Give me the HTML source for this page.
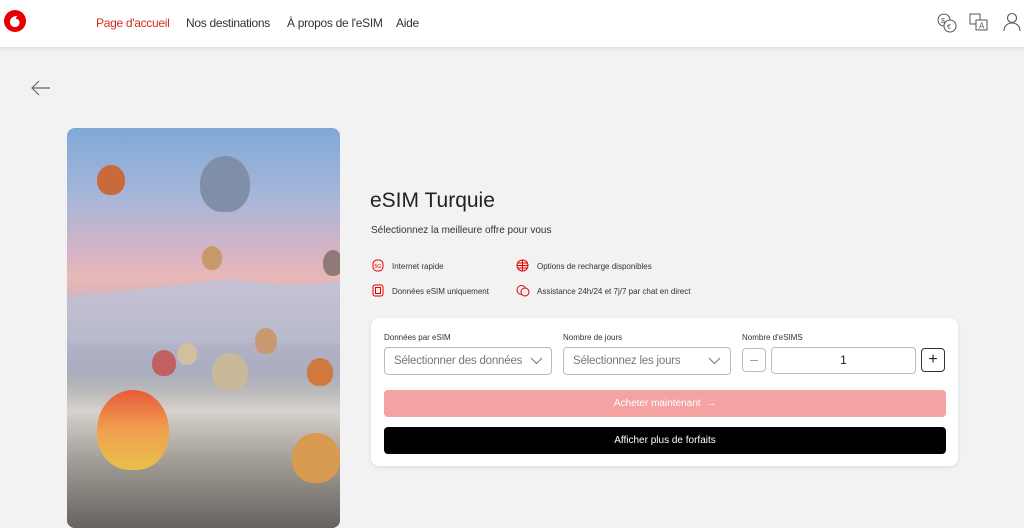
<!DOCTYPE html>
<html><head><meta charset="utf-8"><style>
*{margin:0;padding:0;box-sizing:border-box}
body{width:1024px;height:518px;overflow:hidden;background:#f2f2f2;font-family:"Liberation Sans",sans-serif;color:#222;position:relative}
.hdr{position:absolute;left:0;top:0;width:1024px;height:47px;background:#fff;box-shadow:0 1px 4px rgba(0,0,0,.12)}
.nav{position:absolute;top:16px;font-size:12px;letter-spacing:-0.3px;color:#333;white-space:nowrap}
.abs{position:absolute}
.img{position:absolute;left:67px;top:128px;width:273px;height:400px;border-radius:8px;overflow:hidden;
background:linear-gradient(180deg,#7fa9d6 0%,#a9b6d8 18%,#d9b3c4 32%,#e9b8b6 38%,#c9b3c4 44%,#b7b3c8 52%,#a9aec0 60%,#8d8e96 70%,#9b9690 80%,#6f6a66 92%,#585450 100%)}
.b{position:absolute;border-radius:50% 50% 45% 45%}
.ft{position:absolute;font-size:8px;color:#333;white-space:nowrap}
.lbl{position:absolute;font-size:8px;color:#333}
.sel{position:absolute;top:347px;height:28px;border:1px solid #bbb;border-radius:4px;background:#fff;font-size:11.5px;letter-spacing:-0.2px;color:#777;padding:7px 9px;white-space:nowrap}
</style></head><body>
<div class="hdr">
<svg class="abs" style="left:4px;top:10px" width="22" height="22" viewBox="0 0 22 22"><circle cx="11" cy="11" r="11" fill="#e60000"/><path d="M12 6c-4 0.5-6 3-6 6s2 5 5 5 4.5-2 4.5-4.5-1.8-3.5-3.5-3.6c0-1.5.5-2.5 2-3z" fill="#fff"/></svg>
<div class="nav" style="left:96px;color:#d52b1e">Page d'accueil</div>
<div class="nav" style="left:186px">Nos destinations</div>
<div class="nav" style="left:287px">À propos de l'eSIM</div>
<div class="nav" style="left:396px">Aide</div>
<svg class="abs" style="left:936px;top:12px" width="22" height="22" fill="none" stroke="#555" stroke-width="1"><circle cx="8" cy="8" r="6"/><circle cx="14" cy="14" r="6" fill="#fff"/><text x="5" y="11" font-size="7" fill="#555" stroke="none">$</text><text x="11" y="17" font-size="7" fill="#555" stroke="none">€</text></svg>
<svg class="abs" style="left:969px;top:13px" width="20" height="18" fill="none" stroke="#555" stroke-width="1"><rect x="1" y="1" width="10" height="10"/><rect x="7" y="7" width="11" height="10" fill="#fff"/><text x="10" y="15.5" font-size="8" fill="#555" stroke="none">A</text></svg>
<svg class="abs" style="left:1003px;top:12px" width="18" height="20" fill="none" stroke="#555" stroke-width="1.1"><circle cx="9" cy="6" r="4.5"/><path d="M1 19c0-5 3.5-8 8-8s8 3 8 8"/></svg>
</div>
<svg class="abs" style="left:30px;top:80px" width="20" height="16" fill="none" stroke="#666" stroke-width="1.2"><path d="M20 8H2M9 1L2 8l7 7"/></svg>
<div class="img">
<div class="abs" style="left:0;top:145px;width:273px;height:70px;background:linear-gradient(180deg,#c8c3d6,#b7b9cc);clip-path:polygon(0 35%,30% 22%,60% 8%,80% 18%,100% 12%,100% 100%,0 100%)"></div>
<div class="abs" style="left:0;top:240px;width:273px;height:170px;background:linear-gradient(180deg,rgba(200,195,200,0),#d8d2cc 25%,#a29c96 55%,#5f5a56)"></div>
<div class="b" style="left:133px;top:28px;width:50px;height:56px;background:#7f8fa8"></div>
<div class="b" style="left:30px;top:37px;width:28px;height:30px;background:#c86a3c"></div>
<div class="b" style="left:135px;top:118px;width:20px;height:24px;background:#c89a6a"></div>
<div class="b" style="left:256px;top:122px;width:20px;height:26px;background:#8f7a78"></div>
<div class="b" style="left:30px;top:262px;width:72px;height:80px;background:linear-gradient(180deg,#e85a3a,#f0a050 50%,#e8c04a)"></div>
<div class="b" style="left:225px;top:305px;width:48px;height:50px;background:#d89a50"></div>
<div class="b" style="left:145px;top:225px;width:36px;height:38px;background:#c9b89a"></div>
<div class="b" style="left:188px;top:200px;width:22px;height:26px;background:#c89870"></div>
<div class="b" style="left:85px;top:222px;width:24px;height:26px;background:#c06060"></div>
<div class="b" style="left:110px;top:215px;width:20px;height:22px;background:#d0c0a0"></div>
<div class="b" style="left:240px;top:230px;width:26px;height:28px;background:#d07a40"></div>
</div>
<div class="abs" style="left:370px;top:189px;font-size:21px;color:#222">eSIM Turquie</div>
<div class="abs" style="left:371px;top:225px;font-size:10px;color:#333">Sélectionnez la meilleure offre pour vous</div>
<svg class="abs" style="left:372px;top:259px" width="12" height="13" fill="none" stroke="#e60000"><rect x="1" y="1" width="10" height="11" rx="4"/><text x="2.5" y="9" font-size="5" fill="#e60000" stroke="none">5G</text></svg>
<div class="ft" style="left:392px;top:262px">Internet rapide</div>
<svg class="abs" style="left:372px;top:284px" width="12" height="13" fill="none" stroke="#e60000"><rect x="1" y="1" width="10" height="11" rx="2"/><rect x="3.5" y="3.5" width="5" height="6"/></svg>
<div class="ft" style="left:392px;top:287px">Données eSIM uniquement</div>
<svg class="abs" style="left:516px;top:259px" width="13" height="13" fill="none" stroke="#e60000"><circle cx="6.5" cy="6.5" r="5.5"/><path d="M1 6.5h11M6.5 1v11M2 4h9M2 9h9"/></svg>
<div class="ft" style="left:537px;top:262px">Options de recharge disponibles</div>
<svg class="abs" style="left:516px;top:284px" width="14" height="13" fill="none" stroke="#e60000"><circle cx="5.5" cy="6" r="4.5"/><circle cx="9" cy="8" r="4" fill="#f2f2f2"/></svg>
<div class="ft" style="left:537px;top:287px">Assistance 24h/24 et 7j/7 par chat en direct</div>
<div class="abs" style="left:371px;top:318px;width:587px;height:148px;background:#fff;border-radius:8px;box-shadow:0 1px 4px rgba(0,0,0,.1)"></div>
<div class="lbl" style="left:384px;top:333px">Données par eSIM</div>
<div class="lbl" style="left:563px;top:333px">Nombre de jours</div>
<div class="lbl" style="left:742px;top:333px">Nombre d'eSIMS</div>
<div class="sel" style="left:384px;width:168px">Sélectionner des données<svg class="abs" style="right:8px;top:9px" width="13" height="8" fill="none" stroke="#777"><path d="M1 1l5.5 5.5L12 1"/></svg></div>
<div class="sel" style="left:563px;width:168px">Sélectionnez les jours<svg class="abs" style="right:9px;top:9px" width="13" height="8" fill="none" stroke="#777"><path d="M1 1l5.5 5.5L12 1"/></svg></div>
<div class="abs" style="left:742px;top:348px;width:24px;height:24px;border:1px solid #bbb;border-radius:4px;text-align:center;font-size:14px;line-height:21px;color:#999">–</div>
<div class="abs" style="left:771px;top:347px;width:145px;height:27px;border:1px solid #bbb;border-radius:4px;text-align:center;font-size:12px;line-height:25px">1</div>
<div class="abs" style="left:921px;top:348px;width:24px;height:24px;border:1px solid #333;border-radius:4px;text-align:center;font-size:16px;line-height:21px">+</div>
<div class="abs" style="left:384px;top:390px;width:562px;height:27px;background:#f4a2a2;border-radius:4px;color:#fff;font-size:10px;text-align:center;line-height:28px">Acheter maintenant &nbsp;→</div>
<div class="abs" style="left:384px;top:427px;width:562px;height:27px;background:#000;border-radius:4px;color:#fff;font-size:10px;text-align:center;line-height:28px">Afficher plus de forfaits</div>
</body></html>
